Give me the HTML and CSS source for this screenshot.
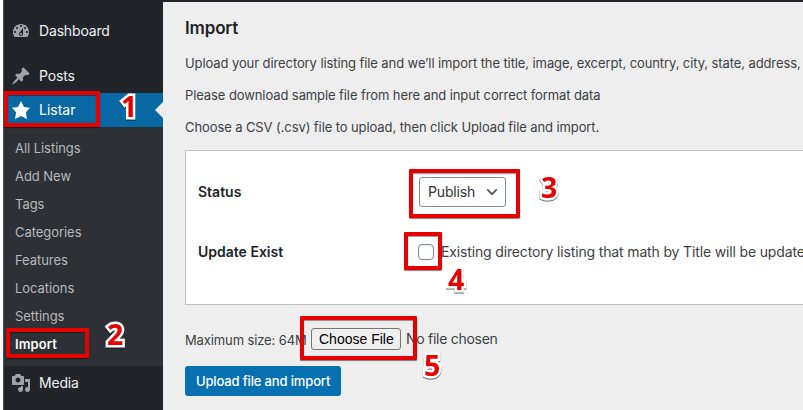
FILE: index.html
```html
<!DOCTYPE html>
<html lang="en">
<head>
<meta charset="utf-8">
<title>Import</title>
<link rel="stylesheet" href="styles.css">
</head>
<body>
<div class="admin">
  <nav class="menu">
    <a class="item dashboard"><svg viewBox="0 0 20 20"><path d="M3.76 16h12.48c1.1-1.37 1.76-3.11 1.76-5 0-4.42-3.58-8-8-8s-8 3.58-8 8c0 1.89.66 3.63 1.76 5zM10 4c.55 0 1 .45 1 1s-.45 1-1 1-1-.45-1-1 .45-1 1-1zM6 6c.55 0 1 .45 1 1s-.45 1-1 1-1-.45-1-1 .45-1 1-1zm8 0c.55 0 1 .45 1 1s-.45 1-1 1-1-.45-1-1 .45-1 1-1zm-5.37 5.55L12 7v6c0 1.1-.9 2-2 2s-2-.9-2-2c0-.57.24-1.08.63-1.45zM4 10c.55 0 1 .45 1 1s-.45 1-1 1-1-.45-1-1 .45-1 1-1zm12 0c.55 0 1 .45 1 1s-.45 1-1 1-1-.45-1-1 .45-1 1-1zm-5 3c0-.55-.45-1-1-1s-1 .45-1 1 .45 1 1 1 1-.45 1-1z"/></svg><span>Dashboard</span></a>
    <a class="item posts"><svg viewBox="0 0 20 20"><path d="M10.44 3.02l1.82-1.82 6.36 6.35-1.83 1.82c-1.05-.68-2.48-.57-3.41.36l-.75.75c-.92.93-1.04 2.35-.35 3.41l-1.83 1.82-2.41-2.41-2.8 2.79c-.42.42-3.38 2.71-3.8 2.29s1.86-3.39 2.28-3.81l2.79-2.79L4.1 9.36l1.83-1.82c1.05.69 2.48.57 3.4-.36l.75-.75c.93-.92 1.05-2.35.36-3.41z"/></svg><span>Posts</span></a>
    <a class="item current"><svg viewBox="0 0 20 20"><path d="M10 1l3 6 6 .75-4.12 4.62L16 19l-6-3-6 3 1.13-6.63L1 7.75 7 7z"/></svg><span>Listar</span></a>
    <div class="submenu">
      <a>All Listings</a>
      <a>Add New</a>
      <a>Tags</a>
      <a>Categories</a>
      <a>Features</a>
      <a>Locations</a>
      <a>Settings</a>
      <a class="active">Import</a>
    </div>
    <a class="item media"><svg viewBox="0 0 20 20"><path d="M13 11V4c0-.55-.45-1-1-1h-1.67L9 1H5L3.67 3H2c-.55 0-1 .45-1 1v7c0 .55.45 1 1 1h10c.55 0 1-.45 1-1zM7 4.5c1.38 0 2.5 1.12 2.5 2.5S8.38 9.5 7 9.5 4.5 8.38 4.5 7 5.62 4.5 7 4.5zM14 6h5v10.5c0 1.38-1.12 2.5-2.5 2.5S14 17.88 14 16.5s1.12-2.5 2.5-2.5c.17 0 .34.02.5.05V9h-3V6zm-4 8.05V13h2v3.5c0 1.38-1.12 2.5-2.5 2.5S7 17.88 7 16.5 8.12 14 9.5 14c.17 0 .34.02.5.05z"/></svg><span>Media</span></a>
    <a class="item next"><svg viewBox="0 0 20 20"><path d="M6 15V2h10v16H6z"/></svg></a>
  </nav>
  <main class="content">
    <h2>Import</h2>
    <p>Upload your directory listing file and we’ll import the title, image, excerpt, country, city, state, address,</p>
    <p>Please download sample file from here and input correct format data</p>
    <p>Choose a CSV (.csv) file to upload, then click Upload file and import.</p>
    <section class="box">
      <div class="row"><b class="status">Status</b><div class="select"><span>Publish</span><svg viewBox="0 0 12 8"><path d="M1.2 1.4L6 6.2l4.8-4.8"/></svg></div></div>
      <div class="row"><b class="exist">Update Exist</b><i class="check"></i><span class="hint">Existing directory listing that math by Title will be update</span></div>
    </section>
    <div class="upload"><span class="size">Maximum size: 64M</span><span class="choose">Choose File</span><span class="none">No file chosen</span></div>
    <a class="submit">Upload file and import</a>
  </main>
  <div class="mark m1"></div><div class="num n1">1</div>
  <div class="mark m2"></div><div class="num n2">2</div>
  <div class="mark m3"></div><div class="num n3">3</div>
  <div class="mark m4"></div><div class="num n4">4</div>
  <div class="mark m5"></div><div class="num n5">5</div>
</div>
</body>
</html>
```
FILE: styles.css
```css
* { box-sizing: border-box; }
body { margin: 0; background: #fff; font: 13px/20px Inter, "Liberation Sans", sans-serif; color: #3c3f44; }
.admin { position: relative; width: 803px; height: 410px; overflow: hidden; display: flex; padding-left: 3px; white-space: nowrap; }
.menu { width: 160px; flex: none; background: #212428; border-left: 1px solid #4a4e53; color: #f0f0f1; }
.item { display: flex; align-items: center; height: 34px; padding-left: 7px; font-size: 14px; letter-spacing: -.16px; }
.item svg { width: 20px; height: 20px; fill: #a0a4a9; margin-right: 8px; }
.dashboard { margin-top: 14px; }
.posts { margin-top: 11px; }
.current { background: #0768a3; color: #fff; position: relative; letter-spacing: 0; }
.current::after { content: ""; position: absolute; right: 0; top: 9px; border: 8px solid transparent; border-left: 0; border-right-color: #eee; }
.current svg { fill: #fff; }
.submenu { height: 239px; background: #2d3035; padding-top: 7px; }
.submenu a { display: block; height: 28px; line-height: 28px; padding-left: 11px; color: #b6b9bd; letter-spacing: -.05px; }
.submenu .active { color: #fff; font-weight: 600; letter-spacing: .1px; }
.media { letter-spacing: -.2px; }
.next { padding-left: 9px; height: 28px; margin-top: 5px; }
.content { flex: 1; min-width: 0; background: #eee; border-top: 2px solid #212428; padding: 16px 0 0 22px; }
h2 { margin: 0 0 15px; font-size: 17px; line-height: 20px; font-weight: 600; color: #1d2327; letter-spacing: -.15px; }
p { margin: 0 0 12px; line-height: 20px; letter-spacing: -.095px; }
.box { margin-top: 13px; height: 155px; background: #fff; border: 1px solid #c3c4c7; border-right: 0; padding: 11px 0 0 12px; }
.row { display: flex; align-items: center; height: 60px; }
.row b { flex: none; width: 221px; font-size: 14px; font-weight: 600; color: #1d2327; }
.row b.exist { width: 220px; }
.select { width: 87px; height: 30px; border: 1px solid #7e8993; border-radius: 3px; display: flex; align-items: center; justify-content: space-between; padding: 0 7px 0 8px; font-size: 14px; letter-spacing: -.15px; color: #2c3338; }
.select svg { width: 12px; height: 8px; fill: none; stroke: #50575e; stroke-width: 1.7; }
.check { flex: none; width: 16px; height: 16px; border: 1px solid #7e8993; border-radius: 4px; margin-right: 7px; box-shadow: inset 0 1px 2px rgba(0,0,0,.1); }
.hint { font-size: 14px; letter-spacing: -.15px; }
.upload { display: flex; align-items: center; margin-top: 22px; height: 24px; }
.size { width: 126px; padding-top: 2px; letter-spacing: -.12px; }
.choose { width: 90px; height: 22px; border: 1px solid #767676; border-radius: 3px; background: #efefef; color: #000; font: 14px/20px "Liberation Sans", sans-serif; padding-left: 7px; margin-right: 5px; }
.none { font-size: 14px; letter-spacing: -.28px; }
.submit { display: flex; align-items: center; width: 156px; height: 30px; margin-top: 15px; border-radius: 3px; background: #0770b0; color: #fff; padding-left: 11px; font-weight: 500; letter-spacing: -.15px; }
.mark { position: absolute; border: 4px solid #e60000; box-shadow: 0 1px 1px rgba(0,0,0,.5), inset 0 1px 1px rgba(0,0,0,.4); border-radius: 1px; }
.m1 { left: 4px; top: 91px; width: 96px; height: 36px; }
.m2 { left: 6px; top: 328px; width: 83px; height: 30px; }
.m3 { left: 409px; top: 169px; width: 111px; height: 49px; }
.m4 { left: 404px; top: 232px; width: 38px; height: 38px; }
.m5 { left: 300px; top: 316px; width: 117px; height: 44px; }
.num { position: absolute; font: bold 28.5px/30px "Open Sans", sans-serif; color: #e60000; -webkit-text-stroke: 5px #fff; paint-order: stroke fill; filter: drop-shadow(0 1px .6px rgba(0,0,0,.6)); }
.n1 { left: 121px; top: 91px; }
.n2 { left: 107px; top: 319px; }
.n3 { left: 541px; top: 172px; }
.n4 { left: 448px; top: 264px; }
.n5 { left: 424px; top: 350px; }
```
